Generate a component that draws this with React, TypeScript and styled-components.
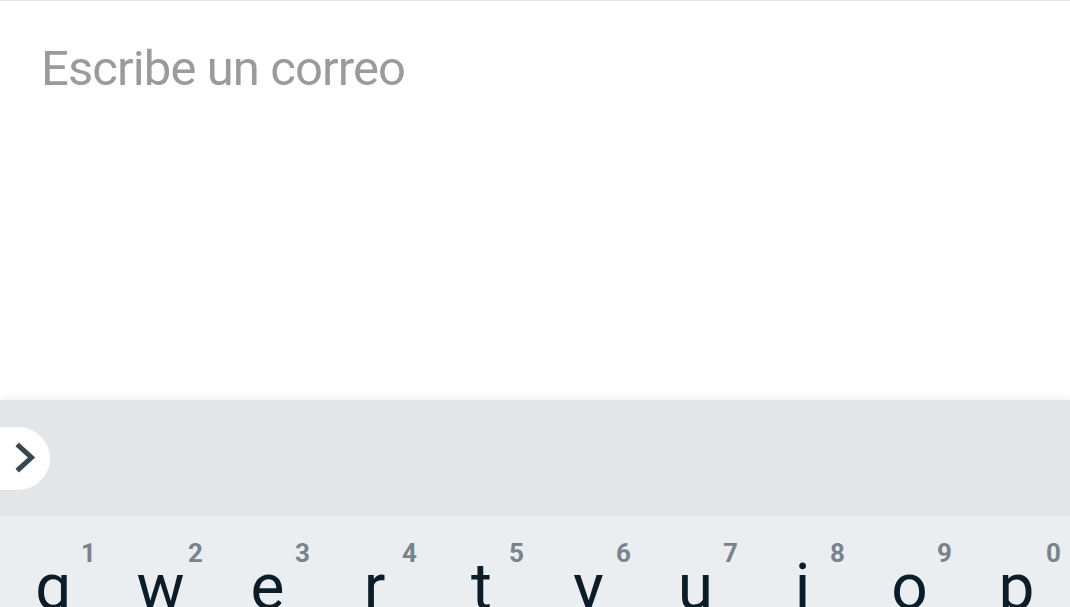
import styled, { createGlobalStyle } from "styled-components";

const GlobalStyle = createGlobalStyle`
    html, body {
        margin: 0;
        padding: 0;
        height: 100%;
        overflow: hidden;
        background: #ffffff;
    }
    #root {
        height: 100%;
    }
`;

const keys = [
    { letter: "q", hint: "1" },
    { letter: "w", hint: "2" },
    { letter: "e", hint: "3" },
    { letter: "r", hint: "4" },
    { letter: "t", hint: "5" },
    { letter: "y", hint: "6" },
    { letter: "u", hint: "7" },
    { letter: "i", hint: "8" },
    { letter: "o", hint: "9" },
    { letter: "p", hint: "0" },
];

const Page = styled.div`
    display: flex;
    flex-direction: column;
    height: 607px;
    overflow: hidden;
    font-family: Roboto, "Noto Sans", sans-serif;
`;

const Compose = styled.div`
    flex: 1;
    display: flex;
    background: #ffffff;
    border-top: 1px solid #e2e2e2;
    padding: 39px 20px 0 41px;
`;

const MailInput = styled.textarea`
    flex: 1;
    border: none;
    outline: none;
    resize: none;
    background: transparent;
    padding: 0;
    margin: 0;
    font-family: Roboto, "Noto Sans", sans-serif;
    font-size: 49px;
    letter-spacing: -0.9px;
    line-height: 1.2;
    color: #202124;

    &::placeholder {
        color: #9b9b9b;
    }
`;

const Toolbar = styled.div`
    height: 116px;
    flex-shrink: 0;
    display: flex;
    align-items: center;
    background: #e2e6e9;
    box-shadow: 0 -3px 6px rgba(0, 0, 0, 0.05);
    position: relative;
`;

const ExpandButton = styled.button`
    width: 50px;
    height: 63px;
    padding: 0 0 0 14px;
    border: none;
    border-radius: 0 32px 32px 0;
    background: #ffffff;
    display: flex;
    align-items: center;
    cursor: pointer;
`;

const Keyboard = styled.div`
    flex-shrink: 0;
    height: 91px;
    background: #eaeef1;
    display: grid;
    grid-template-columns: repeat(10, 107px);
`;

const Key = styled.div`
    position: relative;
    display: flex;
    justify-content: center;
    padding-top: 40px;
`;

const Letter = styled.span`
    font-size: 64px;
    line-height: 1;
    color: #0b1d28;
`;

const Hint = styled.span<{ $last?: boolean }>`
    position: absolute;
    top: 24px;
    right: ${(p) => (p.$last ? "9px" : "11px")};
    font-size: 26px;
    font-weight: 700;
    line-height: 1;
    color: #78848c;
`;

function Chevron() {
    return (
        <svg width="26" height="34" viewBox="0 0 26 34">
            <path
                d="M5 5 L17.5 16.5 L5 28"
                fill="none"
                stroke="#37464f"
                strokeWidth="5"
                strokeLinecap="square"
                strokeLinejoin="miter"
            />
        </svg>
    );
}

export default function App() {
    return (
        <Page>
            <GlobalStyle />
            <Compose>
                <MailInput placeholder="Escribe un correo" />
            </Compose>
            <Toolbar>
                <ExpandButton aria-label="Expandir">
                    <Chevron />
                </ExpandButton>
            </Toolbar>
            <Keyboard>
                {keys.map((k, i) => (
                    <Key key={k.letter}>
                        <Letter>{k.letter}</Letter>
                        <Hint $last={i === keys.length - 1}>{k.hint}</Hint>
                    </Key>
                ))}
            </Keyboard>
        </Page>
    );
}
